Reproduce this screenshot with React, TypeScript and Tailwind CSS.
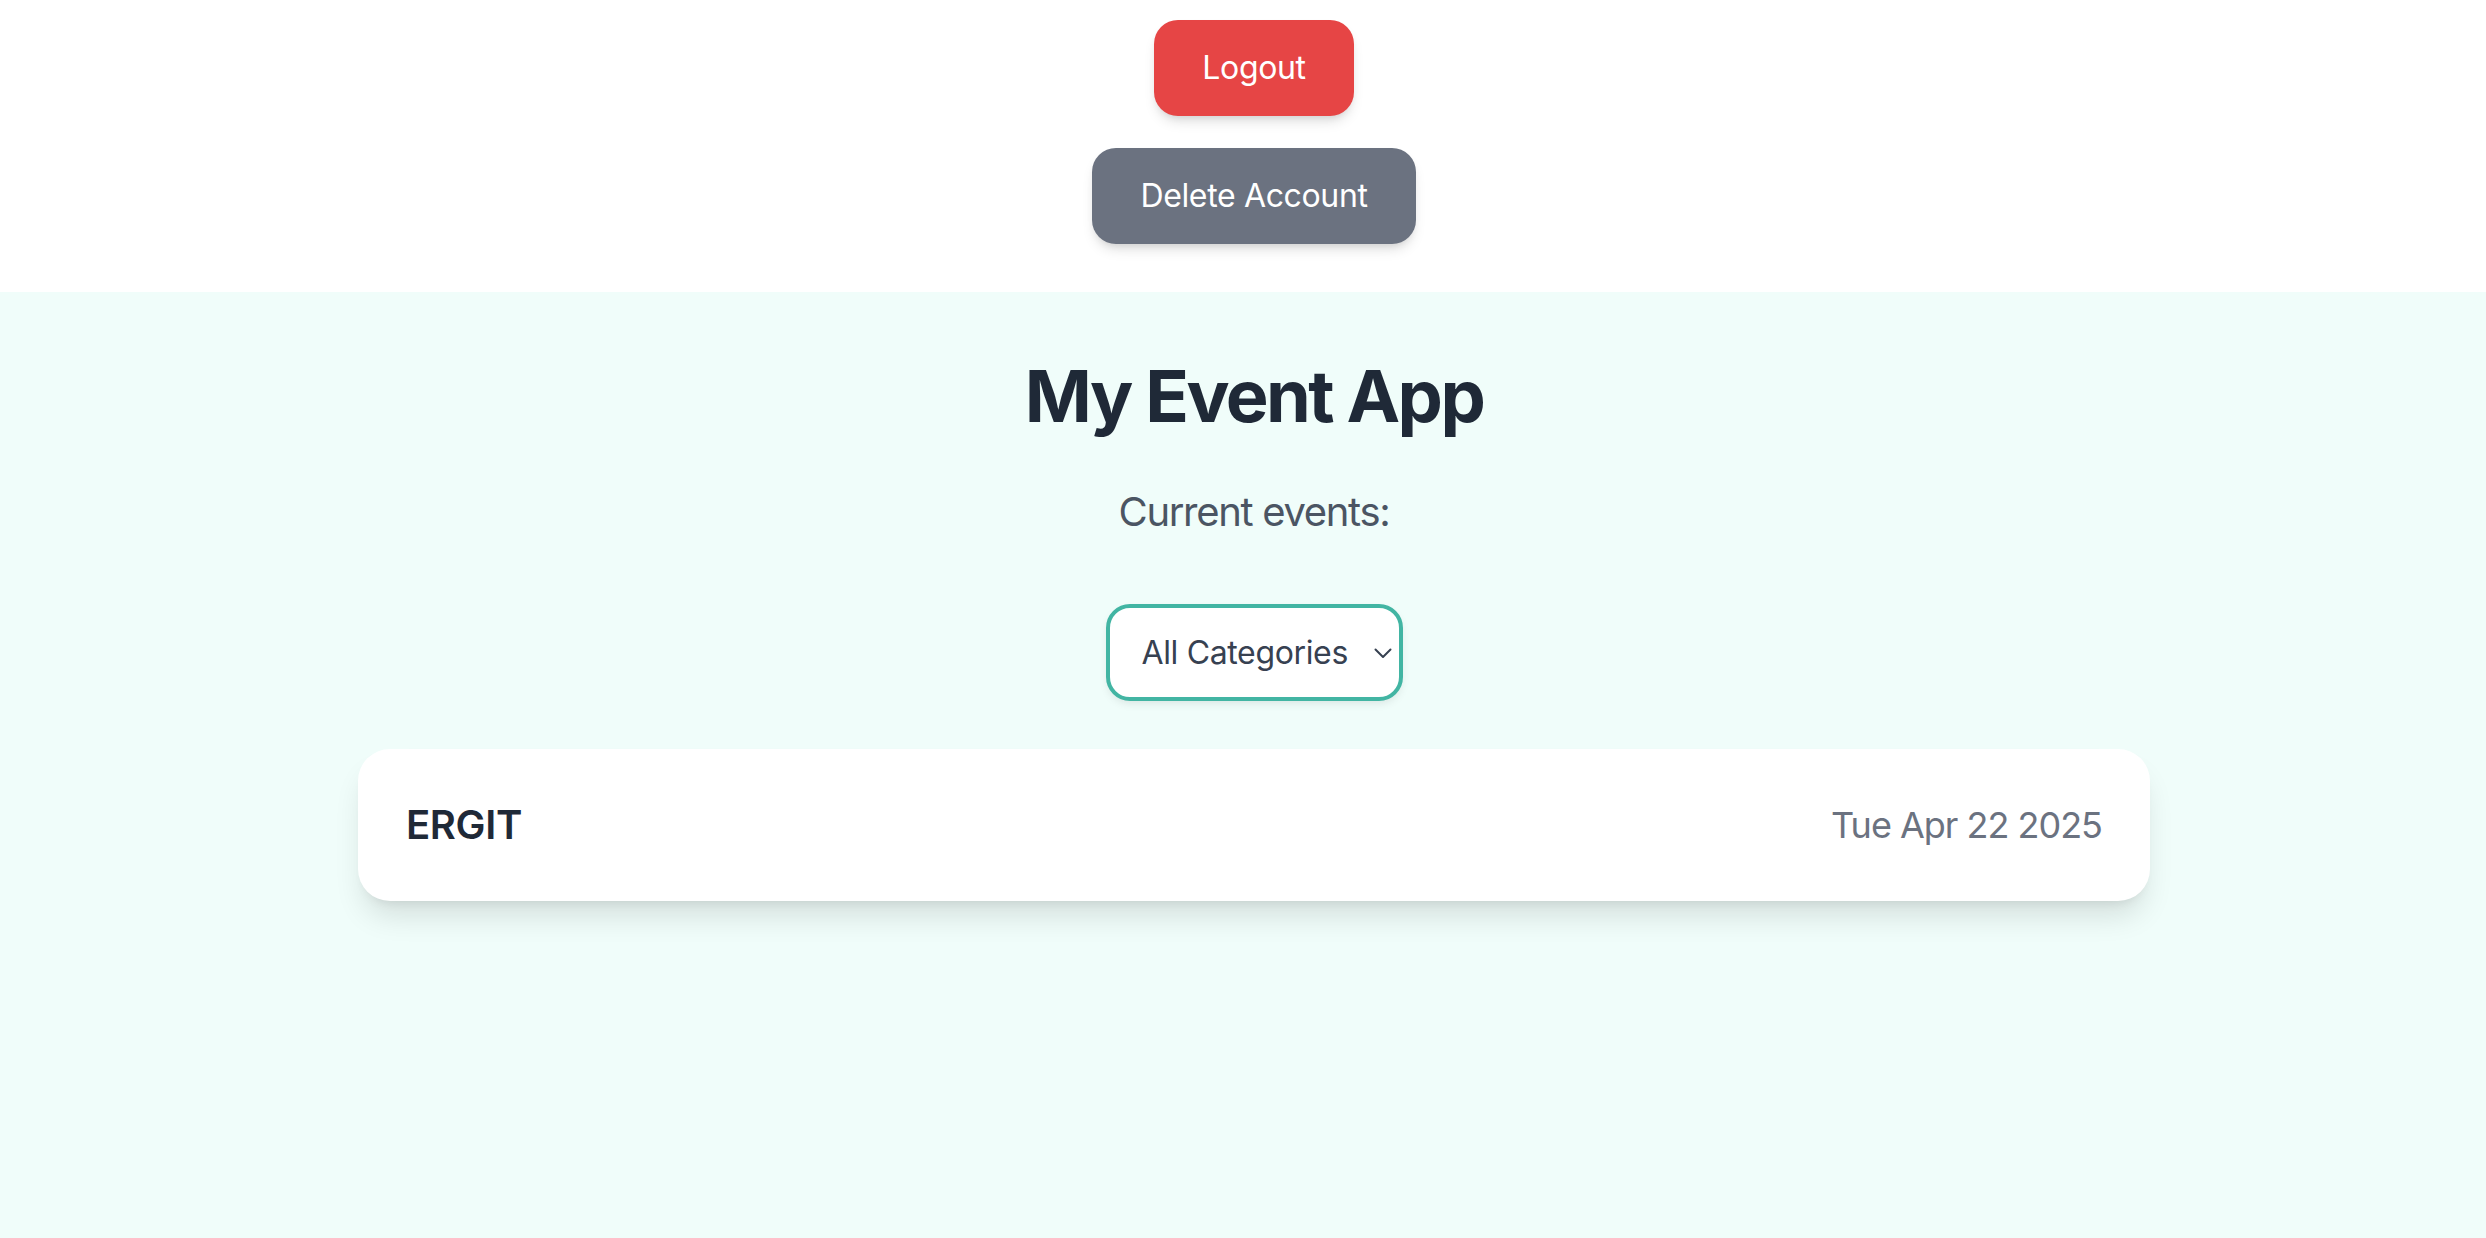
import { useState } from 'react'

export default function App() {
  const [category, setCategory] = useState('all')

  return (
    <div className="min-h-screen flex flex-col font-['Inter','Noto_Sans',sans-serif] tracking-[-0.022em]">
      <div className="bg-white flex flex-col items-center gap-[32px] pt-[20px] pb-[48px] pl-[22px]">
        <button className="h-[96px] px-[48px] rounded-[24px] bg-[#e64545] text-white text-[32px] shadow-[0_8px_14px_-4px_rgba(0,0,0,0.15),0_4px_8px_-4px_rgba(0,0,0,0.1)]">
          Logout
        </button>
        <button className="h-[96px] px-[48px] rounded-[24px] bg-[#6b7280] text-white text-[32px] shadow-[0_8px_14px_-4px_rgba(0,0,0,0.15),0_4px_8px_-4px_rgba(0,0,0,0.1)]">
          Delete Account
        </button>
      </div>

      <div className="flex-1 bg-[#f0fdfa] flex flex-col items-center pt-[64px] pl-[22px]">
        <h1 className="text-[72px] leading-[80px] font-bold text-[#1f2937] mb-[48px] tracking-[-0.036em]">My Event App</h1>
        <p className="text-[40px] leading-[56px] text-[#4b5563] mb-[64px] tracking-[-0.033em]">Current events:</p>

        <div className="relative">
          <select
            value={category}
            onChange={(e) => setCategory(e.target.value)}
            className="appearance-none h-[97px] w-[297px] pl-[32px] pr-[48px] bg-white border-[4px] border-[#42b5a3] rounded-[24px] text-[32px] text-[#374151] outline-none shadow-[0_4px_10px_-2px_rgba(0,0,0,0.1)]"
          >
            <option value="all">All Categories</option>
            <option value="music">Music</option>
            <option value="sports">Sports</option>
          </select>
          <svg
            className="absolute right-[11px] top-[44px] pointer-events-none"
            width="18"
            height="11"
            viewBox="0 0 18 11"
            fill="none"
          >
            <path d="M1.5 1.5 L9 9 L16.5 1.5" stroke="#374151" strokeWidth="2" strokeLinecap="round" strokeLinejoin="round" />
          </svg>
        </div>

        <div className="mt-[48px] w-[1792px] h-[152px] px-[48px] flex items-center justify-between bg-white rounded-[32px] shadow-[0_20px_30px_-6px_rgba(0,0,0,0.12),0_8px_12px_-8px_rgba(0,0,0,0.1)]">
          <span className="text-[40px] font-semibold text-[#1f2937]">ERGIT</span>
          <span className="text-[36px] text-[#6b7280] tracking-[-0.028em]">Tue Apr 22 2025</span>
        </div>
      </div>
    </div>
  )
}
